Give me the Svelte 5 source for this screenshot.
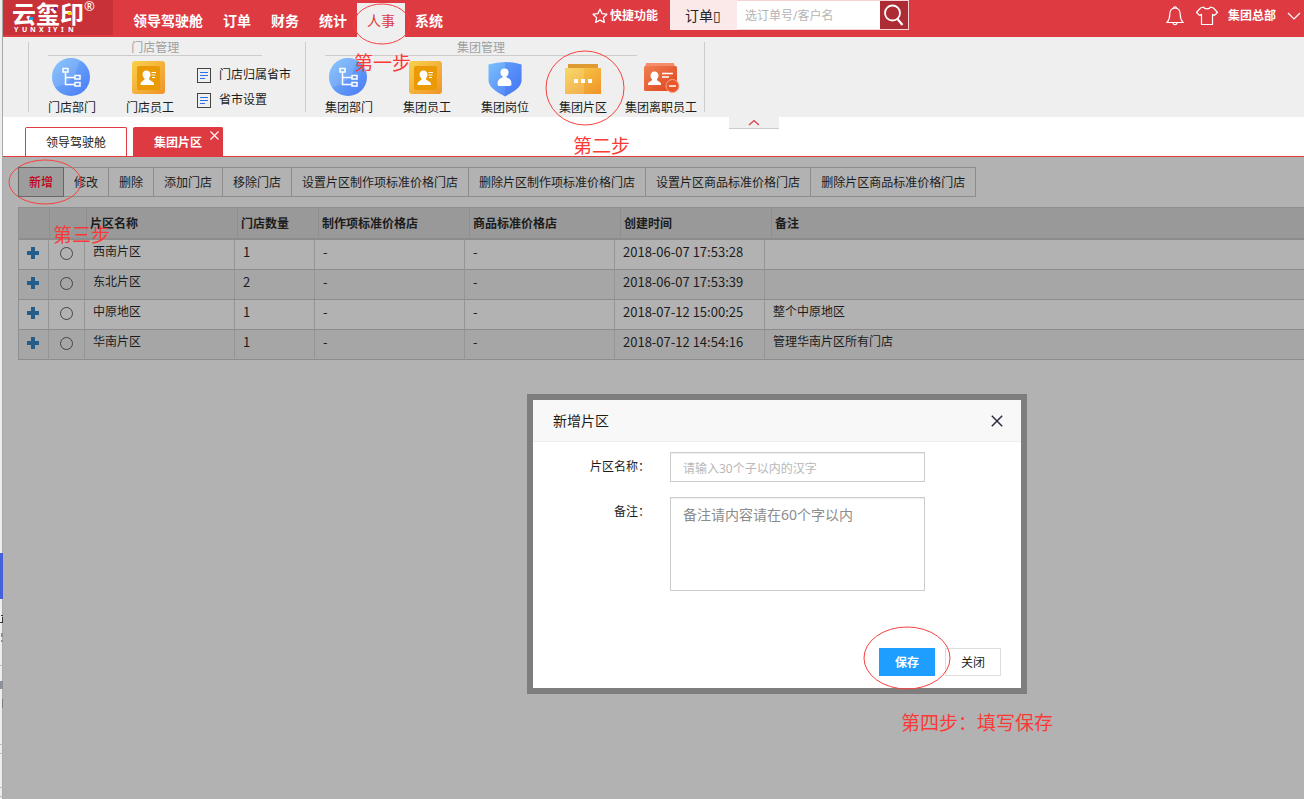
<script lang="ts">
    const menus = ['领导驾驶舱', '订单', '财务', '统计', '人事', '系统'];
    const activeMenu = '人事';

    const groups = [
        {
            title: '门店管理',
            items: [
                { name: '门店部门', icon: 'dept' },
                { name: '门店员工', icon: 'staff' }
            ],
            links: ['门店归属省市', '省市设置']
        },
        {
            title: '集团管理',
            items: [
                { name: '集团部门', icon: 'dept' },
                { name: '集团员工', icon: 'staff' },
                { name: '集团岗位', icon: 'post' },
                { name: '集团片区', icon: 'area' },
                { name: '集团离职员工', icon: 'leave' }
            ],
            links: []
        }
    ];

    const actions = [
        '新增',
        '修改',
        '删除',
        '添加门店',
        '移除门店',
        '设置片区制作项标准价格门店',
        '删除片区制作项标准价格门店',
        '设置片区商品标准价格门店',
        '删除片区商品标准价格门店'
    ];

    const columns = ['片区名称', '门店数量', '制作项标准价格店', '商品标准价格店', '创建时间', '备注'];

    const rows = [
        { name: '西南片区', count: 1, time: '2018-06-07 17:53:28', remark: '' },
        { name: '东北片区', count: 2, time: '2018-06-07 17:53:39', remark: '' },
        { name: '中原地区', count: 1, time: '2018-07-12 15:00:25', remark: '整个中原地区' },
        { name: '华南片区', count: 1, time: '2018-07-12 14:54:16', remark: '管理华南片区所有门店' }
    ];

    let selected = $state('');
    let areaName = $state('');
    let areaRemark = $state('');
    let dialogOpen = $state(true);
</script>

<svg width="0" height="0" class="defs" aria-hidden="true">
    <defs>
        <linearGradient id="blue" x1="0" y1="0" x2="1" y2="1">
            <stop offset="0" stop-color="#7cc0fb" />
            <stop offset="1" stop-color="#4878f6" />
        </linearGradient>
        <linearGradient id="gold" x1="0" y1="0" x2="1" y2="1">
            <stop offset="0" stop-color="#f7d24c" />
            <stop offset="1" stop-color="#f09329" />
        </linearGradient>
        <linearGradient id="rust" x1="0" y1="0" x2="1" y2="1">
            <stop offset="0" stop-color="#ee8054" />
            <stop offset="1" stop-color="#e04218" />
        </linearGradient>
    </defs>
</svg>

<div class="shell">
    <!-- sliver of the window underneath -->
    <div class="edge">
        <svg width="3" height="246" viewBox="0 0 3 246" aria-hidden="true">
            <path d="M0 0h3v46H0z" fill="#4560d8" />
            <path d="M1 62h2v1H1zM2 64h1v6H2zM0 69h3v1H0z" fill="#333" />
            <path d="M1 80h2v4H1zM1 87h2v2H1zM0 128h3v8H0z" fill="#8d9099" />
            <path d="M2 146h1v9H2z" fill="#777b85" />
            <path d="M0 112h3v1H0zM0 191h3v1H0zM0 200h3v1H0zM0 234h3v1H0zM0 243h3v1H0z" fill="#bbb" />
        </svg>
    </div>

    <div class="app">
        <header class="top">
            <a class="logo" href="#home" aria-label="云玺印">
                <svg width="100" height="35" viewBox="0 0 100 35">
                    <text class="logo__name" x="9" y="23">云玺印</text>
                    <rect x="26" y="17" width="4" height="3" fill="#1ba0e8" />
                    <rect x="51" y="7" width="3" height="3" fill="#7d1d7c" />
                    <rect x="65" y="12" width="4" height="3" fill="#ffd200" />
                    <text class="logo__latin" x="11 19 27 36 45 50 58 65" y="32">YUNXIYIN</text>
                    <text class="logo__reg" x="81" y="11">®</text>
                </svg>
            </a>
            <nav class="menu">
                {#each menus as menu}
                    <a href="#{menu}" class:active={menu === activeMenu}>{menu}</a>
                {/each}
            </nav>
            <div class="top__search">
                <a class="quick" href="#quick">
                    <svg width="16" height="16" viewBox="0 0 16 16" fill="none" stroke="#fff" stroke-width="1.3" stroke-linejoin="round">
                        <path d="M8 1.2l2.1 4.4 4.8.6-3.5 3.4.9 4.8L8 12.1l-4.3 2.3.9-4.8L1.1 6.2l4.8-.6z" />
                    </svg>
                    快捷功能
                </a>
                <form class="search">
                    <select aria-label="搜索类型"><option>订单▯</option></select>
                    <input type="text" aria-label="关键字" placeholder="选订单号/客户名" />
                    <button type="button" aria-label="搜索">
                        <svg width="22" height="24" viewBox="0 0 22 24" fill="none" stroke="#fff" stroke-width="1.8">
                            <circle cx="9.5" cy="10" r="7.5" />
                            <path d="M14.5 16l5 6" stroke-width="2.2" />
                        </svg>
                    </button>
                </form>
            </div>
            <div class="user">
                <svg width="18" height="20" viewBox="0 0 18 20" fill="none" stroke="#fff" stroke-width="1.2">
                    <path d="M9 2C5.500 2.300 3.800 4.800 3.800 8c0 4-.6 6-2.800 8.500h16c-2.200-2.500-2.800-4.500-2.800-8.500 0-3.200-1.700-5.700-5.200-6z" />
                    <path d="M7.500 2a1.500 1.200 0 0 1 3 0M7 16.800a2 1.800 0 0 0 4 0" />
                </svg>
                <svg width="22" height="20" viewBox="0 0 22 20" fill="none" stroke="#fff" stroke-width="1.2" stroke-linejoin="round">
                    <path d="M7.500 1c.8 2.400 6.200 2.400 7 0l3 1 4 4.500-3.300 3-1.700-1.200V18.500h-11V8.300L3.800 9.500l-3.300-3L4.500 2z" />
                </svg>
                <a href="#account">集团总部</a>
                <svg class="user__arrow" width="14" height="8" viewBox="0 0 14 8" fill="none" stroke="#fff" stroke-width="1.200">
                    <path d="M1 1l6 6 6-6" />
                </svg>
            </div>
        </header>

        <section class="ribbon">
            {#each groups as group}
                <div class="group">
                    <h2>{group.title}</h2>
                    <div class="group__body">
                        {#each group.items as item}
                            <a class="tile" href="#{item.name}">
                                {#if item.icon === 'dept'}
                                    <svg width="40" height="40" viewBox="0 0 40 40">
                                        <circle cx="19" cy="20" r="19" fill="url(#blue)" />
                                        <path d="M28 3.300A19 19 0 0 0 3 30q19-2 25-26.700z" fill="#fff" opacity=".12" />
                                        <g fill="none" stroke="#fff" stroke-width="1.500">
                                            <path d="M11 11.500h5v3.500h-5zM23 18.500h5v3.500H23zM23 25.500h5v3.500H23zM13.500 15v12.500H23M13.500 20.500H23" />
                                        </g>
                                    </svg>
                                {:else if item.icon === 'staff'}
                                    <svg width="40" height="40" viewBox="0 0 40 40">
                                        <rect x="2" y="4" width="33" height="33" rx="3" fill="url(#gold)" />
                                        <rect x="7" y="9" width="23" height="24" rx="2" fill="#ea9a05" />
                                        <path d="M16.500 13.500c2.500 0 4 1.800 4 4 0 2-1 3-1.500 3.800v1.200l4 2.500c.8.600 1 1.300 1 3H10.500c0-1.700.2-2.400 1-3l3-2.500v-1.200c-.8-.8-2-1.800-2-3.800 0-2.200 1.500-4 4-4z" fill="#fff" />
                                        <path d="M21.500 15.500h4.500M21.500 18h4M22 20.500h3" stroke="#fff" />
                                    </svg>
                                {:else if item.icon === 'post'}
                                    <svg width="40" height="40" viewBox="0 0 40 40">
                                        <path d="M3.500 7.500Q20 2.500 36.500 7.500V23c0 8-9 12-16.500 16.500C12.500 35 3.500 31 3.500 23z" fill="url(#blue)" />
                                        <path d="M20 5.200q8.500 0 16.500 2.300V23c0 8-9 12-16.500 16.500z" fill="#3c6df6" opacity=".3" />
                                        <circle cx="19.500" cy="15.500" r="4" fill="#fff" />
                                        <path d="M17.500 18.500h4v2c3.500 1 5 3 5 6.500 0 1.200-.6 2-2 2h-10c-1.400 0-2-.8-2-2 0-3.500 1.500-5.500 5-6.500z" fill="#fff" />
                                    </svg>
                                {:else if item.icon === 'area'}
                                    <svg width="40" height="40" viewBox="0 0 40 40">
                                        <path d="M5 7h30v5H5z" fill="#e09a33" />
                                        <path d="M2 11h36v26H2z" fill="url(#gold)" />
                                        <path d="M2 11h19v26H2z" fill="#fff" opacity=".15" />
                                        <path d="M11 22h4v4h-4zM18 22h4v4h-4zM25 22h4v4h-4z" fill="#fff" />
                                    </svg>
                                {:else}
                                    <svg width="40" height="40" viewBox="0 0 40 40">
                                        <path d="M5 6h28l1 4H4z" fill="#f58d6b" />
                                        <rect x="3" y="9" width="33" height="25" rx="1.500" fill="url(#rust)" />
                                        <path d="M13.500 14.500c2.500 0 4 1.700 4 4 0 1.800-1 3-1.500 3.700v1l3 2c.8.600 1 1.200 1 2.800H7c0-1.600.2-2.200 1-2.800l3-2v-1c-.8-.7-1.500-1.900-1.500-3.700 0-2.300 1.500-4 4-4z" fill="#fff" />
                                        <path d="M21 16.500h11M21 20h7" stroke="#fff" stroke-width="1.400" />
                                        <circle cx="31.500" cy="29" r="6.500" fill="#e9562d" stroke="#f3a58b" />
                                        <path d="M28 29h7" stroke="#fff" stroke-width="1.500" />
                                    </svg>
                                {/if}
                                <span>{item.name}</span>
                            </a>
                        {/each}
                        {#if group.links.length}
                            <div class="links">
                                {#each group.links as link}
                                    <a href="#{link}">
                                        <svg width="14" height="15" viewBox="0 0 14 15" fill="none">
                                            <rect x=".5" y=".5" width="13" height="14" stroke="#444" />
                                            <path d="M3 4.500h8M3 7.500h8M3 10.500h5" stroke="#2672f5" />
                                        </svg>
                                        {link}
                                    </a>
                                {/each}
                            </div>
                        {/if}
                    </div>
                </div>
            {/each}
            <button class="collapse" type="button" aria-label="收起">
                <svg width="12" height="7" viewBox="0 0 12 7" fill="none" stroke="#dd3a42" stroke-width="1.200">
                    <path d="M1 6l5-4.500L11 6" />
                </svg>
            </button>
        </section>

        <div class="tabs">
            <a class="tab" href="#cockpit">领导驾驶舱</a>
            <div class="tab tab--active">
                <a href="#area">集团片区</a>
                <button type="button" aria-label="关闭标签">
                    <svg width="9" height="9" viewBox="0 0 9 9" stroke="#fff" stroke-width="1.100"><path d="M.5.5l8 8M8.500.5l-8 8" /></svg>
                </button>
            </div>
        </div>

        <main class="content">
            <div class="toolbar">
                {#each actions as action, i}
                    <button type="button" class:current={i === 0} onclick={() => { if (i === 0) dialogOpen = true; }}>{action}</button>
                {/each}
            </div>

            <div class="grid">
                <table class="grid__head">
                    <colgroup>
                        <col class="h-plus" /><col class="h-radio" /><col class="h-wide" /><col class="h-count" />
                        <col class="h-wide" /><col class="h-wide" /><col class="h-wide" /><col />
                    </colgroup>
                    <thead>
                        <tr>
                            <th></th>
                            <th></th>
                            {#each columns as column}
                                <th scope="col">{column}</th>
                            {/each}
                        </tr>
                    </thead>
                </table>
                <table class="grid__body">
                    <colgroup>
                        <col class="plus" /><col class="radio" /><col class="wide" /><col class="count" />
                        <col class="wide" /><col class="wide" /><col class="wide" /><col />
                    </colgroup>
                    <tbody>
                        {#each rows as row}
                            <tr>
                                <td class="pick">
                                    <button type="button" aria-label="展开{row.name}">
                                        <svg width="12" height="12" viewBox="0 0 12 12"><path d="M4 0h4v4h4v4H8v4H4V8H0V4h4z" fill="#245c8a" /></svg>
                                    </button>
                                </td>
                                <td class="pick"><input type="radio" name="area" value={row.name} aria-label={row.name} bind:group={selected} /></td>
                                <td>{row.name}</td>
                                <td class="num">{row.count}</td>
                                <td class="num">-</td>
                                <td class="num">-</td>
                                <td class="num">{row.time}</td>
                                <td>{row.remark}</td>
                            </tr>
                        {/each}
                    </tbody>
                </table>
            </div>
        </main>
    </div>

    {#if dialogOpen}
        <div class="dialog" role="dialog" aria-labelledby="dialog-title">
            <div class="dialog__head">
                <h3 id="dialog-title">新增片区</h3>
                <button type="button" aria-label="关闭" onclick={() => (dialogOpen = false)}>
                    <svg width="12" height="12" viewBox="0 0 12 12" stroke="#2e2d3c" stroke-width="1.500"><path d="M.8.8l10.400 10.400M11.200.8L.8 11.200" /></svg>
                </button>
            </div>
            <form class="dialog__form">
                <label for="area-name">片区名称：</label>
                <input id="area-name" type="text" placeholder="请输入30个子以内的汉字" bind:value={areaName} />
                <label for="area-remark">备注：</label>
                <textarea id="area-remark" placeholder="备注请内容请在60个字以内" bind:value={areaRemark}></textarea>
            </form>
            <div class="dialog__foot">
                <button class="save" type="button">保存</button>
                <button type="button" onclick={() => (dialogOpen = false)}>关闭</button>
            </div>
        </div>
    {/if}

    <!-- step markers over the page -->
    <svg class="guide" width="1304" height="799" viewBox="0 0 1304 799">
        <g fill="none" stroke="#f8413f">
            <ellipse cx="382" cy="24" rx="28" ry="20" />
            <ellipse cx="585" cy="88" rx="39" ry="37" />
            <ellipse cx="45" cy="182" rx="36" ry="22" />
            <ellipse cx="907" cy="658" rx="43" ry="31" />
        </g>
        <text x="354" y="70">第一步</text>
        <text x="573" y="153">第二步</text>
        <text x="53" y="242">第三步</text>
        <text x="901" y="730">第四步：填写保存</text>
    </svg>
</div>

<style>
    :global(body) {
        margin: 0;
        background: #b2b2b2;
    }

    .shell {
        position: relative;
        display: flex;
        min-height: 100vh;
        overflow: hidden;
        font: 12px/20px "Noto Sans", "Noto Sans CJK SC", sans-serif;
        color: #1c1c1c;
    }

    .shell a {
        color: inherit;
        text-decoration: none;
    }

    button,
    input,
    select,
    textarea {
        box-sizing: border-box;
        margin: 0;
        padding: 0;
        border: 0;
        border-radius: 0;
        background: none;
        font: inherit;
        color: inherit;
    }

    svg {
        display: block;
        flex: none;
    }

    .defs {
        position: absolute;
    }

    .edge {
        box-sizing: border-box;
        flex: none;
        width: 3px;
        padding-top: 553px;
        background: linear-gradient(to right, #ededed 2px, #a9a9a9 2px);
    }

    .app {
        flex: 1;
        min-width: 0;
    }

    /* top bar */
    .top {
        display: flex;
        height: 37px;
        background: #dd3a42;
        color: #fff;
        font-weight: 700;
        white-space: nowrap;
    }

    .logo {
        width: 110px;
        height: 35px;
        margin-right: 10px;
        background: #c93138;
    }

    .logo svg {
        fill: #fff;
    }

    .logo__name {
        font-size: 24px;
        font-weight: 700;
    }

    .logo__latin {
        font-size: 7px;
        font-weight: 700;
    }

    .logo__reg {
        font-size: 13px;
        font-weight: 400;
    }

    .menu {
        display: flex;
        padding-top: 3px;
        font-size: 14px;
        line-height: 36px;
    }

    .menu a {
        height: 34px;
        padding: 0 10px;
    }

    .menu .active {
        background: #efefef;
        color: #dd3a42;
        font-weight: 400;
    }

    .top__search {
        display: flex;
        align-items: flex-start;
        margin-left: 139px;
    }

    .quick {
        display: flex;
        align-items: center;
        gap: 2px;
        height: 32px;
        margin-right: 12px;
    }

    .search {
        display: flex;
        box-sizing: border-box;
        width: 239px;
        height: 30px;
        border: 1px solid #f6d4d5;
        border-left: 0;
        font-weight: 400;
    }

    .search select {
        width: 67px;
        height: 30px;
        margin-top: -1px;
        padding: 2px 0 0 15px;
        appearance: none;
        background: #fbe9e9;
        color: #222;
        font-size: 14px;
    }

    .search input {
        flex: 1;
        min-width: 0;
        padding: 2px 0 0 8px;
        background: #fff;
        color: #333;
    }

    .search input::placeholder {
        color: #b4b4b4;
    }

    .search button {
        display: grid;
        place-items: center;
        width: 28px;
        background: #ad2b32;
    }

    .user {
        display: flex;
        align-items: center;
        height: 32px;
        margin-left: auto;
        padding-right: 3px;
    }

    .user svg + svg {
        margin: 0 10px 0 12px;
    }

    .user .user__arrow {
        margin-left: 11px;
    }

    /* ribbon */
    .ribbon {
        position: relative;
        display: flex;
        height: 75px;
        padding: 5px 0 0 25px;
        background: #efefef;
    }

    .group {
        height: 70px;
        padding: 0 4px;
        border-left: 1px solid #ccc;
    }

    .group:nth-child(2) {
        border-right: 1px solid #ccc;
    }

    .group h2 {
        width: 80%;
        height: 13px;
        margin: 0 0 0 15px;
        border-bottom: 1px solid #ccc;
        color: #a0a0a0;
        font-size: 12px;
        font-weight: 400;
        line-height: 12px;
        text-align: center;
    }

    .group__body {
        display: flex;
    }

    .tile {
        display: flex;
        flex-direction: column;
        align-items: center;
        width: 78px;
        padding-top: 1px;
        line-height: 22px;
        white-space: nowrap;
    }

    .links {
        display: flex;
        flex-direction: column;
        gap: 5px;
        width: 112px;
        padding-top: 9px;
    }

    .links a {
        display: flex;
        align-items: center;
        gap: 8px;
        padding-left: 8px;
        white-space: nowrap;
    }

    .collapse {
        position: absolute;
        top: 80px;
        left: 726px;
        display: grid;
        place-items: center;
        width: 50px;
        height: 12px;
        border-bottom: 1px solid #ccc;
        background: #efefef;
    }

    /* page tabs */
    .tabs {
        display: flex;
        gap: 6px;
        height: 29px;
        padding: 10px 0 0 22px;
        border-bottom: 1px solid #dd3a42;
        background: #fff;
    }

    .tab {
        box-sizing: border-box;
        height: 29px;
        padding: 0 20px;
        border: 1px solid #dd3a42;
        border-bottom: 0;
        border-radius: 2px 2px 0 0;
        line-height: 30px;
    }

    .tab--active {
        position: relative;
        background: #dd3a42;
        color: #fff;
        font-weight: 700;
    }

    .tab--active button {
        position: absolute;
        top: 3px;
        right: 3px;
    }

    .tab--active button svg {
        margin: 0;
    }

    /* content */
    .content {
        padding: 10px 0 0 15px;
    }

    .toolbar {
        display: flex;
        margin-bottom: 10px;
    }

    .toolbar button {
        height: 30px;
        padding: 2px 10px 0;
        border: 1px solid #8c8c8c;
        white-space: nowrap;
    }

    .toolbar button + button {
        margin-left: -1px;
    }

    .toolbar .current {
        z-index: 1;
        border-color: #666;
        background: #9d9d9d;
        color: #c00018;
        font-weight: 500;
    }

    .grid {
        border: 1px solid #8f8f8f;
        border-width: 1px 0 0 1px;
    }

    .grid table {
        width: 100%;
        table-layout: fixed;
        border-spacing: 0;
    }

    .h-plus { width: 31px; }
    .h-radio { width: 37px; }
    .h-wide { width: 151px; }
    .h-count { width: 81px; }
    .plus { width: 30px; }
    .radio { width: 36px; }
    .wide { width: 150px; }
    .count { width: 80px; }

    th {
        height: 28px;
        padding: 2px 3px 0;
        border-right: 1px solid #8f8f8f;
        border-bottom: 2px solid #8c8c8c;
        background: #999;
        text-align: left;
    }

    td {
        height: 24px;
        padding: 0 8px 5px;
        border-right: 1px solid #959595;
        border-bottom: 1px solid #8c8c8c;
        white-space: nowrap;
    }

    th:last-child,
    td:last-child {
        border-right: 0;
    }

    tr:nth-child(even) td {
        background: #a6a6a6;
    }

    .num {
        font-family: "Noto Sans CJK SC", sans-serif;
        font-size: 13px;
    }

    .pick {
        height: 26px;
        padding: 0 1px 3px 0;
    }

    .pick button,
    .pick input {
        display: block;
        margin: 0 auto;
    }

    .pick input {
        appearance: none;
        width: 13px;
        height: 13px;
        border: 1px solid #444;
        border-radius: 50%;
    }

    .pick input:checked {
        background: #245c8a;
    }

    /* dialog */
    .dialog {
        position: absolute;
        top: 394px;
        left: 527px;
        box-sizing: border-box;
        width: 500px;
        border: 6px solid #7e7e7e;
        background: #fff;
    }

    .dialog__head {
        display: flex;
        align-items: center;
        justify-content: space-between;
        height: 41px;
        padding: 1px 18px 0 20px;
        box-sizing: border-box;
        border-bottom: 1px solid #eee;
        background: #f8f8f8;
        height: 42px;
    }

    .dialog h3 {
        margin: 0;
        font-size: 14px;
        font-weight: 400;
        line-height: 22px;
    }

    .dialog__form {
        display: grid;
        grid-template-columns: 117px 255px;
        gap: 15px 20px;
        padding-top: 10px;
    }

    .dialog label {
        padding-top: 5px;
        text-align: right;
    }

    .dialog input,
    .dialog textarea {
        border: 1px solid #ccc;
        box-shadow: inset 0 1px 1px #eee;
        padding: 2px 12px 0;
    }

    .dialog input {
        height: 30px;
    }

    .dialog textarea {
        height: 94px;
        padding-top: 7px;
        font-size: 14px;
        resize: none;
    }

    .dialog input::placeholder {
        color: #b8b8b8;
    }

    .dialog textarea::placeholder {
        color: #8c8c8c;
    }

    .dialog__foot {
        display: flex;
        justify-content: flex-end;
        gap: 10px;
        padding: 57px 20px 12px;
    }

    .dialog__foot button {
        width: 56px;
        height: 28px;
        padding-top: 2px;
        border: 1px solid #dedede;
    }

    .dialog__foot .save {
        border-color: #1e9fff;
        background: #1e9fff;
        color: #fff;
        font-weight: 700;
    }

    .guide {
        position: absolute;
        top: 0;
        left: 0;
        pointer-events: none;
        fill: #fb3a38;
        font-size: 19px;
    }
</style>
